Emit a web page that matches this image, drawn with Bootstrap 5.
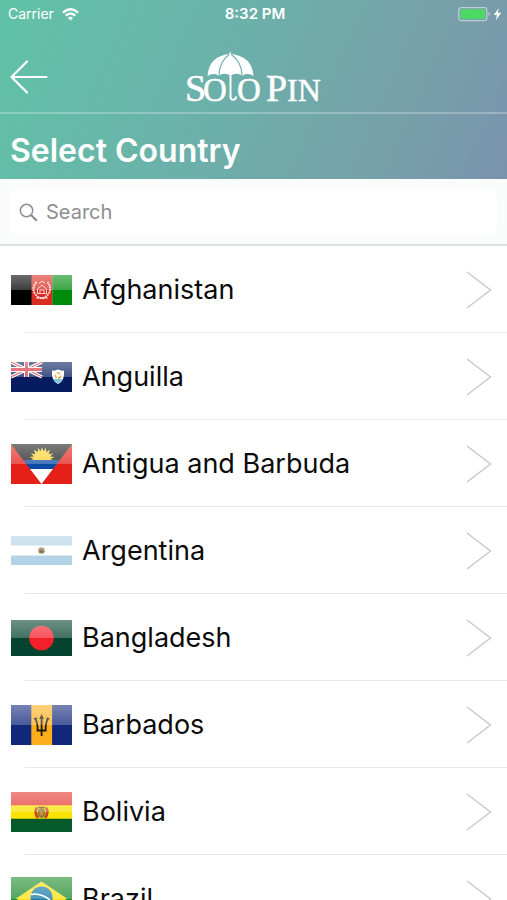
<!DOCTYPE html>
<html lang="en">
<head>
<meta charset="utf-8">
<meta name="viewport" content="width=device-width, initial-scale=1">
<title>Select Country</title>
<link href="https://cdn.jsdelivr.net/npm/bootstrap@5.3.0/dist/css/bootstrap.min.css" rel="stylesheet">
<style>
body{font-family:Inter,"Liberation Sans",sans-serif;background:#fff;color:#0b0b0b}
.app-header{background:linear-gradient(114deg,#60c3a6 0%,#6bb1aa 42%,#76a1a9 76%,#7a93ad 100%);color:#fff}
.status-bar{height:28px;padding:0 5px 0 8px;font-size:14px;line-height:28px}
.status-side{flex:1 1 0}
.status-time{font-size:15px;font-weight:600}
.nav-bar{height:86px;padding:14px 10px 0;border-bottom:2px solid rgba(255,255,255,.26)}
.nav-side{flex:1 1 0}
.page-title{font-size:32px;line-height:40px;font-weight:600;padding:17px 10px 8px}
.search-bar{background:#fafcfc;padding:10px 10px 9px;border-bottom:2px solid #dde0e0}
.search-field{background:#fff;border-radius:8px;height:46px;padding:0 9px}
.search-field input{font-size:20px;line-height:24px;color:#333}
.search-field input::placeholder{color:#8e8e90;opacity:1}
.country-list{overflow-y:auto;scrollbar-width:none}
.country-list::-webkit-scrollbar{display:none}
.country-row{height:87px;padding:0 15px 0 11px;gap:10px;font-size:27px;line-height:32px;color:#0b0b0b;background:linear-gradient(#e6e8e8,#e6e8e8) right bottom/calc(100% - 25px) 1px no-repeat}
.country-row:hover{color:#000}
.flag{position:relative;width:61px}
.flag::after{content:"";position:absolute;inset:0 0 50% 0;background:linear-gradient(rgba(255,255,255,.42),rgba(255,255,255,.24))}
.flag svg{width:100%;height:auto}
</style>
<script src="https://cdn.jsdelivr.net/npm/bootstrap@5.3.0/dist/js/bootstrap.bundle.min.js"></script>
</head>
<body class="d-flex flex-column vh-100 overflow-hidden">
<header class="app-header flex-shrink-0">
  <div class="status-bar d-flex align-items-center">
    <div class="status-side d-flex align-items-center gap-2">
      <span>Carrier</span>
      <svg width="17" height="13" viewBox="0 0 17 13" fill="none" stroke="#fff" stroke-width="2.3" aria-hidden="true"><path d="M.9 4.7Q8.500-2.300 16.100 4.700M3.700 7.700Q8.500 3.300 13.300 7.700"/><path d="M8.500 12.500L5.900 9.800Q8.500 7.700 11.100 9.800Z" fill="#fff" stroke="none"/></svg>
    </div>
    <span class="status-time">8:32 PM</span>
    <div class="status-side d-flex align-items-center justify-content-end">
      <svg width="44" height="16" viewBox="0 0 44 16" aria-hidden="true"><rect x=".8" y="1.600" width="28" height="13" rx="2.500" fill="none" stroke="#fff" stroke-opacity=".5" stroke-width="1.300"/><rect x="2.500" y="3.200" width="24.600" height="9.800" rx="1" fill="#4cd964"/><path d="M30.500 6v4q1.500-.5 1.500-2t-1.500-2z" fill="#fff" fill-opacity=".5"/><path d="M40.800 2L35.800 9h3.100l-1 5.300L43.200 6.700h-3.400z" fill="#fff"/></svg>
    </div>
  </div>
  <nav class="nav-bar d-flex align-items-center" aria-label="Main">
    <div class="nav-side">
      <button type="button" class="btn p-0 border-0 d-block" aria-label="Back">
        <svg class="d-block" width="38" height="34" viewBox="0 0 38 34" fill="none" stroke="#fff" stroke-width="2.200" stroke-linecap="round" stroke-linejoin="round"><path d="M36.500 17H1.500M17 1.500L1.500 17L17 32.500"/></svg>
      </button>
    </div>
    <svg width="140" height="70" viewBox="-2 -8 140 70" role="img" aria-label="Solo Pin" fill="#fff" font-family="'Liberation Serif',serif">
      <path d="M21.500 26Q23 6 43.500 4V2h1.200v2Q66 6 67.500 26Q62 22.500 56.500 25.500Q50.500 22 44.500 25.500Q38.500 22 32.500 25.500Q27 22.500 21.500 26Z"/>
      <path d="M33 25Q33.500 12 43 4.500M56 25Q55.500 12 45.300 4.500" fill="none" stroke="#6eaea9" stroke-width="1.100"/>
      <g stroke="#fff" stroke-width=".5">
        <text x="-1" y="51" font-size="38">S</text>
        <text x="17" y="51" font-size="33">O</text>
        <text x="51" y="51" font-size="33">O</text>
        <text x="80" y="51" font-size="38">P</text>
        <text x="101" y="51" font-size="32">IN</text>
      </g>
      <path d="M44.500 25V45Q44 49.800 47 49.800Q50 49.800 50 46.500" fill="none" stroke="#fff" stroke-width="2"/>
    </svg>
    <div class="nav-side"></div>
  </nav>
  <h1 class="page-title mb-0">Select Country</h1>
</header>
<form class="search-bar flex-shrink-0" role="search">
  <div class="search-field d-flex align-items-center gap-2">
    <svg class="flex-shrink-0" width="19" height="19" viewBox="0 0 19 19" fill="none" stroke="#8e8e90" aria-hidden="true"><circle cx="7.500" cy="7.500" r="6.200" stroke-width="1.500"/><path d="M12 12L17.800 17.800" stroke-width="2.200"/></svg>
    <label for="country-search" class="visually-hidden">Search</label>
    <input id="country-search" type="text" class="form-control border-0 p-0 bg-transparent shadow-none" placeholder="Search">
  </div>
</form>
<main class="country-list flex-grow-1" id="country-list">
  <a href="#afghanistan" class="country-row d-flex align-items-center text-decoration-none">
    <span class="flag flex-shrink-0"><svg class="d-block" viewBox="0 0 61 30"><path fill="#000" d="M0 0h21v30H0z"/><path fill="#d92b20" d="M20.500 0h21v30h-21z"/><path fill="#008a0c" d="M41.300 0H61v30H41.300z"/><g fill="none" stroke="#fff" stroke-opacity=".8"><path d="M25.500 7Q19 15 26.500 21.500Q31 25 35 21.500Q42.500 15 36.500 7" stroke-width="2" stroke-dasharray="2 .7"/><path d="M26.500 18.500V14L31 10l4.500 4v4.500zM29 18v-3h4v3M28 8.500l3-2.500 3 2.500M25 23h12"/></g></svg></span>
    <span class="flex-grow-1">Afghanistan</span>
    <svg width="26" height="38" viewBox="0 0 26 38" fill="none" stroke="#c8c8c8" stroke-width="1.400" aria-hidden="true"><path d="M1 1L24.500 19L1 37"/></svg>
  </a>
  <a href="#anguilla" class="country-row d-flex align-items-center text-decoration-none">
    <span class="flag flex-shrink-0"><svg class="d-block" viewBox="0 0 61 30"><path fill="#071c60" d="M0 0h61v30H0z"/><path d="M0 0L31 15M31 0L0 15" stroke="#fff" stroke-width="3.600"/><path d="M0 0L31 15M31 0L0 15" stroke="#d8303a" stroke-width="1.200"/><path d="M15.500 0v15M0 7.500h31" stroke="#fff" stroke-width="5"/><path d="M15.500 0v15M0 7.500h31" stroke="#d8303a" stroke-width="2.800"/><path fill="#fff" d="M41 8.500Q44 9 47 7.500Q50 9 53 8.500Q54 19 47 22Q40 19 41 8.500Z"/><path fill="#7cc7d8" d="M42 17h10Q50 20.500 47 21.300Q43.500 20 42 17Z"/><circle cx="47" cy="13.500" r="2.700" fill="none" stroke="#eda23b" stroke-width="1.700" stroke-dasharray="4 1.500"/></svg></span>
    <span class="flex-grow-1">Anguilla</span>
    <svg width="26" height="38" viewBox="0 0 26 38" fill="none" stroke="#c8c8c8" stroke-width="1.400" aria-hidden="true"><path d="M1 1L24.500 19L1 37"/></svg>
  </a>
  <a href="#antigua-and-barbuda" class="country-row d-flex align-items-center text-decoration-none">
    <span class="flag flex-shrink-0"><svg class="d-block" viewBox="0 0 61 40"><path fill="#171c1b" d="M0 0h61v40H0z"/><path fill="#ffd22e" d="M18.500 17l4-2-4-2 4.500-.5-3.200-3.300 4.500 1L23 5.500l3.800 2.800L27 3.800l2.500 3.500 1.500-4 1.500 4L35 3.800l.3 4.500L39 5.500l-1.300 4.700 4.500-1L39 12.500l4.500.5-4 2 4 2z"/><path fill="#0b4aa5" d="M10 16h41v9H10z"/><path fill="#fff" d="M10 25h41v15H10z"/><path fill="#e52019" d="M0 0L30.500 40H0zM61 0L30.500 40H61z"/></svg></span>
    <span class="flex-grow-1">Antigua and Barbuda</span>
    <svg width="26" height="38" viewBox="0 0 26 38" fill="none" stroke="#c8c8c8" stroke-width="1.400" aria-hidden="true"><path d="M1 1L24.500 19L1 37"/></svg>
  </a>
  <a href="#argentina" class="country-row d-flex align-items-center text-decoration-none">
    <span class="flag flex-shrink-0"><svg class="d-block" viewBox="0 0 61 29"><path fill="#b5d3e7" d="M0 0h61v29H0z"/><path fill="#fff" d="M0 9.500h61v10H0z"/><circle cx="30.500" cy="14.500" r="3.300" fill="#9b8460"/><circle cx="30.500" cy="14.500" r="1.500" fill="#746345"/></svg></span>
    <span class="flex-grow-1">Argentina</span>
    <svg width="26" height="38" viewBox="0 0 26 38" fill="none" stroke="#c8c8c8" stroke-width="1.400" aria-hidden="true"><path d="M1 1L24.500 19L1 37"/></svg>
  </a>
  <a href="#bangladesh" class="country-row d-flex align-items-center text-decoration-none">
    <span class="flag flex-shrink-0"><svg class="d-block" viewBox="0 0 61 36"><path fill="#054331" d="M0 0h61v36H0z"/><circle cx="30.500" cy="18" r="12.300" fill="#f3202a"/></svg></span>
    <span class="flex-grow-1">Bangladesh</span>
    <svg width="26" height="38" viewBox="0 0 26 38" fill="none" stroke="#c8c8c8" stroke-width="1.400" aria-hidden="true"><path d="M1 1L24.500 19L1 37"/></svg>
  </a>
  <a href="#barbados" class="country-row d-flex align-items-center text-decoration-none">
    <span class="flag flex-shrink-0"><svg class="d-block" viewBox="0 0 61 40"><path fill="#11277c" d="M0 0h61v40H0z"/><path fill="#fcae1b" d="M20.300 0h20.800v40H20.300z"/><path d="M30.600 12V31M23.800 13.500Q27 17 26.500 25.500H34.700Q34.200 17 37.500 13.500" fill="none" stroke="#1d1a12" stroke-width="1.800"/><path d="M30.600 9l2.400 5h-4.800zM22.300 13.500l3.200-1.300.7 3.500zM39 13.500l-3.200-1.300-.7 3.500z" fill="#1d1a12"/></svg></span>
    <span class="flex-grow-1">Barbados</span>
    <svg width="26" height="38" viewBox="0 0 26 38" fill="none" stroke="#c8c8c8" stroke-width="1.400" aria-hidden="true"><path d="M1 1L24.500 19L1 37"/></svg>
  </a>
  <a href="#bolivia" class="country-row d-flex align-items-center text-decoration-none">
    <span class="flag flex-shrink-0"><svg class="d-block" viewBox="0 0 61 40"><path fill="#e3332b" d="M0 0h61v14H0z"/><path fill="#fbe300" d="M0 13.300h61V27H0z"/><path fill="#045a2a" d="M0 26.700h61V40H0z"/><path d="M26 15.500Q22.500 20 27 26M35 15.500Q38.500 20 34 26" fill="none" stroke="#cf4026" stroke-width="2.600"/><ellipse cx="30.500" cy="21" rx="4" ry="5" fill="#7d7f38"/><circle cx="30.500" cy="21.500" r="2.200" fill="#d58b39"/><path d="M27 15.500h7" stroke="#7c4b2a" stroke-width="1.500"/></svg></span>
    <span class="flex-grow-1">Bolivia</span>
    <svg width="26" height="38" viewBox="0 0 26 38" fill="none" stroke="#c8c8c8" stroke-width="1.400" aria-hidden="true"><path d="M1 1L24.500 19L1 37"/></svg>
  </a>
  <a href="#brazil" class="country-row d-flex align-items-center text-decoration-none">
    <span class="flag flex-shrink-0"><svg class="d-block" viewBox="0 0 61 43"><path fill="#1d8a2b" d="M0 0h61v43H0z"/><path fill="#ffdf12" d="M30.500 4.500L56 21.500L30.500 38.500L5 21.500z"/><circle cx="30.500" cy="20.500" r="11" fill="#1478a8"/><path d="M20 17.500Q31 15.500 40.500 24.500" fill="none" stroke="#fff" stroke-width="1.700"/></svg></span>
    <span class="flex-grow-1">Brazil</span>
    <svg width="26" height="38" viewBox="0 0 26 38" fill="none" stroke="#c8c8c8" stroke-width="1.400" aria-hidden="true"><path d="M1 1L24.500 19L1 37"/></svg>
  </a>
</main>
</body>
</html>
